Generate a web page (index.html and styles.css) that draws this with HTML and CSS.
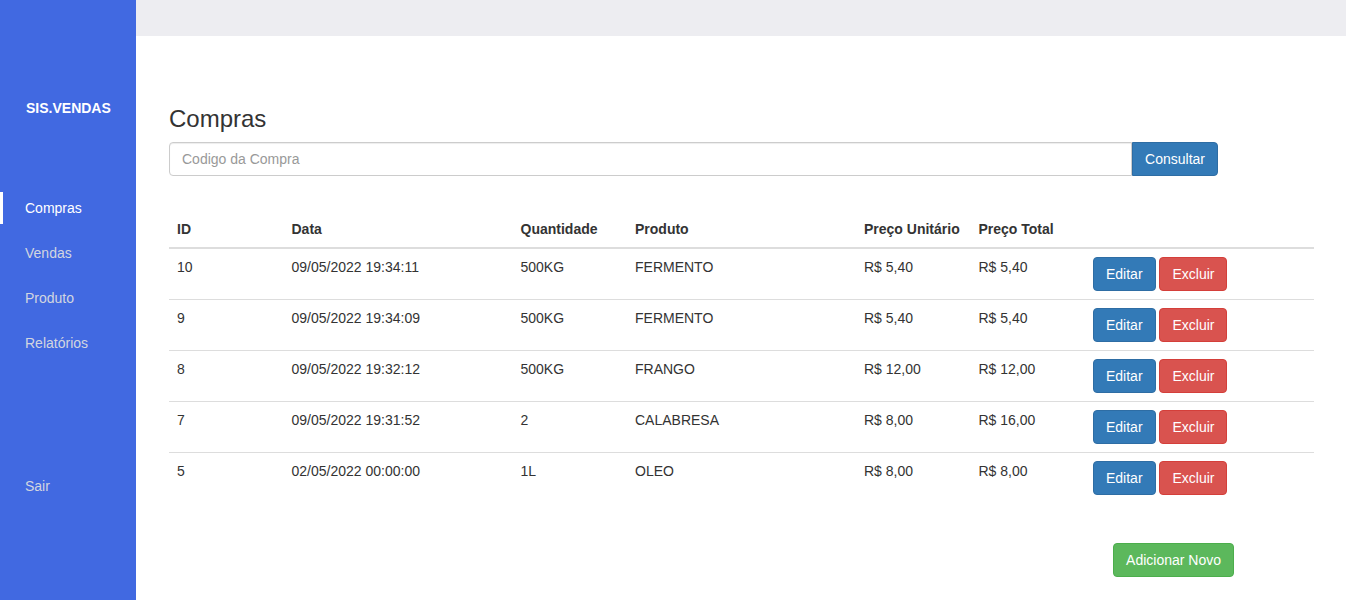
FILE: index.html
```html
<!DOCTYPE html>
<html lang="pt-BR">
<head>
<meta charset="utf-8">
<title>Compras</title>
<link rel="stylesheet" href="styles.css">
</head>
<body>
<aside class="sidebar">
  <div class="brand">SIS.VENDAS</div>
  <nav class="nav">
    <a class="nav-link active" href="#">Compras</a>
    <a class="nav-link" href="#">Vendas</a>
    <a class="nav-link" href="#">Produto</a>
    <a class="nav-link" href="#">Relatórios</a>
  </nav>
  <a class="nav-link sair" href="#">Sair</a>
</aside>
<main class="main">
  <div class="topbar"></div>
  <div class="content">
    <h3 class="title">Compras</h3>
    <div class="input-group">
      <input class="form-control" type="text" placeholder="Codigo da Compra">
      <button class="btn btn-primary btn-group-end">Consultar</button>
    </div>
    <table class="table">
      <colgroup>
        <col class="c1"><col class="c2"><col class="c1"><col class="c2"><col class="c1"><col class="c1"><col class="c2">
      </colgroup>
      <thead>
        <tr><th>ID</th><th>Data</th><th>Quantidade</th><th>Produto</th><th>Preço Unitário</th><th>Preço Total</th><th></th></tr>
      </thead>
      <tbody>
        <tr><td>10</td><td>09/05/2022 19:34:11</td><td>500KG</td><td>FERMENTO</td><td>R$ 5,40</td><td>R$ 5,40</td><td><button class="btn btn-primary">Editar</button> <button class="btn btn-danger">Excluir</button></td></tr>
        <tr><td>9</td><td>09/05/2022 19:34:09</td><td>500KG</td><td>FERMENTO</td><td>R$ 5,40</td><td>R$ 5,40</td><td><button class="btn btn-primary">Editar</button> <button class="btn btn-danger">Excluir</button></td></tr>
        <tr><td>8</td><td>09/05/2022 19:32:12</td><td>500KG</td><td>FRANGO</td><td>R$ 12,00</td><td>R$ 12,00</td><td><button class="btn btn-primary">Editar</button> <button class="btn btn-danger">Excluir</button></td></tr>
        <tr><td>7</td><td>09/05/2022 19:31:52</td><td>2</td><td>CALABRESA</td><td>R$ 8,00</td><td>R$ 16,00</td><td><button class="btn btn-primary">Editar</button> <button class="btn btn-danger">Excluir</button></td></tr>
        <tr><td>5</td><td>02/05/2022 00:00:00</td><td>1L</td><td>OLEO</td><td>R$ 8,00</td><td>R$ 8,00</td><td><button class="btn btn-primary">Editar</button> <button class="btn btn-danger">Excluir</button></td></tr>
      </tbody>
    </table>
    <div class="actions">
      <button class="btn btn-success">Adicionar Novo</button>
    </div>
  </div>
</main>
</body>
</html>
```
FILE: styles.css
```css
* { box-sizing: border-box; }
html, body { height: 100%; }
body {
  margin: 0;
  font-family: "Liberation Sans", Arial, sans-serif;
  font-size: 14px;
  line-height: 20px;
  color: #333;
  background: #fff;
  display: flex;
  overflow: hidden;
}
.sidebar {
  width: 136px;
  flex: 0 0 136px;
  height: 100vh;
  background: #4169e1;
  padding-top: 98px;
  display: flex;
  flex-direction: column;
}
.brand {
  padding-left: 26px;
  color: #fff;
  font-weight: bold;
  font-size: 14px;
  line-height: 20px;
}
.nav {
  margin-top: 74px;
  display: flex;
  flex-direction: column;
  gap: 13px;
}
.nav-link {
  display: block;
  padding: 6px 0 6px 22px;
  border-left: 3px solid transparent;
  color: #d2d6e0;
  text-decoration: none;
  line-height: 20px;
}
.nav-link.active {
  color: #fff;
  border-left-color: #fff;
}
.sair { margin-top: 111px; }
.main {
  flex: 1;
  min-width: 0;
}
.topbar {
  height: 36px;
  background: #ededf1;
}
.content {
  padding: 0 32px 0 33px;
}
.title {
  font-size: 24px;
  font-weight: 500;
  line-height: 27px;
  margin: 69px 0 10px;
  color: #333;
}
.input-group {
  display: flex;
  width: 1049px;
}
.form-control {
  flex: 1;
  height: 34px;
  padding: 6px 12px;
  font-family: inherit;
  font-size: 14px;
  color: #555;
  border: 1px solid #ccc;
  border-radius: 4px 0 0 4px;
  box-shadow: inset 0 1px 1px rgba(0,0,0,.075);
  outline: none;
}
.form-control::placeholder { color: #999; }
.btn {
  display: inline-block;
  padding: 6px 12px;
  font-family: inherit;
  font-size: 14px;
  line-height: 20px;
  border: 1px solid transparent;
  border-radius: 4px;
  color: #fff;
  cursor: pointer;
  vertical-align: middle;
}
.btn-group-end { border-radius: 0 4px 4px 0; }
.btn-primary { background: #337ab7; border-color: #2e6da4; }
.btn-danger { background: #d9534f; border-color: #d43f3a; }
.btn-success { background: #5cb85c; border-color: #4cae4c; }
.table {
  width: 100%;
  table-layout: fixed;
  border-collapse: collapse;
  margin-top: 35px;
}
.c1 { width: 10%; }
.c2 { width: 20%; }
.table th {
  text-align: left;
  font-weight: bold;
  padding: 8px;
  line-height: 20px;
  vertical-align: bottom;
  border-bottom: 2px solid #ddd;
}
.table td {
  padding: 8px;
  line-height: 20px;
  vertical-align: top;
  border-top: 1px solid #ddd;
}
.table tbody tr:first-child td { border-top: 0; }
.actions {
  display: flex;
  justify-content: flex-end;
  margin-top: 40px;
  padding-right: 80px;
}
```
